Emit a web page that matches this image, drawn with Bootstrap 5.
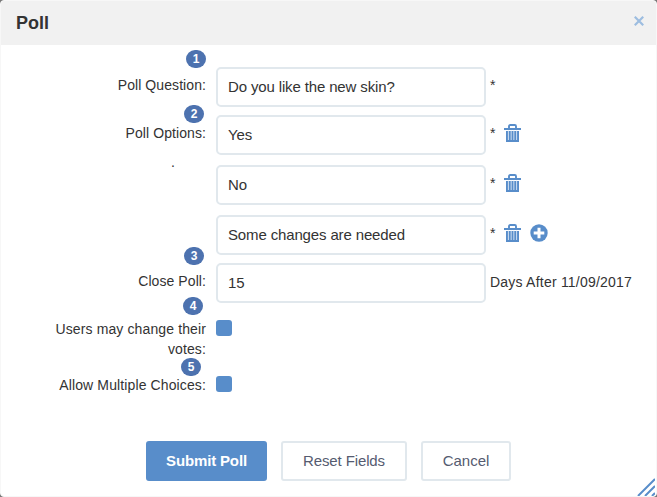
<!DOCTYPE html>
<html lang="en">
<head>
<meta charset="utf-8">
<meta name="viewport" content="width=device-width, initial-scale=1">
<title>Poll</title>
<link href="https://cdn.jsdelivr.net/npm/bootstrap@5.3.0/dist/css/bootstrap.min.css" rel="stylesheet">
<style>
body{background:#777;font-family:"Liberation Sans",Arial,sans-serif;font-size:14px;line-height:20px;color:#333;overflow:hidden}
.poll-dialog{width:657px;height:497px;border:1px solid #f7f7f7;border-radius:4px}
.poll-head{height:44px;background:#f1f1f1;padding:0 13px 0 15px}
.poll-title{font-size:18px;line-height:44px;color:#333}
.close-x{width:10px;height:10px;margin-top:-5px;margin-right:-1px}
.poll-form{padding-top:22px}
.poll-row{min-height:40px;margin-bottom:8px}
.option-row{margin-bottom:10px}
.close-row,.tick-row{margin-bottom:16px}
.tick-row-short{min-height:20px}
.poll-label{width:205px;flex:none;text-align:right;margin-right:10px;padding-top:8px;position:relative;letter-spacing:.08px}
.tick-row .poll-label{padding-top:0;letter-spacing:.12px}
.poll-field{width:270px;height:40px;border:2px solid #e1e8ed;border-radius:5px;padding:0 10px 2px;font-size:15px;line-height:20px;letter-spacing:-.14px;color:#333}
.star{width:18px;padding:8px 0 0 4px}
.days{padding:9px 0 0 4px;letter-spacing:.22px}
.step{position:absolute;width:20px;height:18px;border-radius:9px;background:#4d72af;color:#fff;font-size:12px;line-height:18px;letter-spacing:0;font-weight:700;padding:0;text-align:center}
.step-1{right:0;top:-17px}.step-2{right:2px;top:-10px}.step-3{right:2px;top:-16px}.step-4{right:3px;top:-22px}.step-5{right:5px;top:-17px}
.trash{width:17px;height:18px;margin:9px 0 0}
.plus{width:18px;height:18px;margin:9px 0 0 9px}
.dot{position:absolute;right:31px;top:-13px}
.tick{width:16px;height:16px;border-radius:3px;background:#588dca;margin-top:1px}
.poll-actions{padding:0 0 15px 145px;gap:14px}
.poll-btn{height:40px;border:2px solid #e1e8ed;border-radius:3px;font-size:15px;line-height:20px;color:#555b70;padding:8px 0;background:#fff}
.poll-submit{width:121px;background:#588dca;border-color:#588dca;color:#fff;letter-spacing:-.15px}
.poll-reset{width:126px;letter-spacing:-.12px}.poll-cancel{width:90px}
.grip{position:absolute;right:1px;bottom:0;width:18px;height:18px}
</style>
</head>
<body>
<svg class="d-none"><symbol id="trash" viewBox="0 0 17 18"><path d="M5 4V2.300Q5 1 6.300 1h4.400Q12 1 12 2.300V4" fill="none" stroke="#588dca" stroke-width="1.900"/><path d="M0 4h17v2H0zM2 7h13v11H2z" fill="#588dca"/><path d="M4.400 6.500v9.500M7.150 6.500v9.500M9.850 6.500v9.500M12.600 6.500v9.500" stroke="#dfeaf5" stroke-width=".9"/></symbol></svg>
<main class="poll-dialog bg-white position-relative d-flex flex-column overflow-hidden">
  <header class="poll-head d-flex align-items-center justify-content-between">
    <h1 class="poll-title fw-bold m-0">Poll</h1>
    <svg class="close-x" viewBox="0 0 9 9"><path d="M.7.7l7.600 7.600M8.300.7L.7 8.300" stroke="#9dbde0" stroke-width="2"/></svg>
  </header>
  <form class="poll-form flex-grow-1">
    <div class="poll-row d-flex"><label class="poll-label" for="q">Poll Question:<span class="badge step step-1">1</span></label><input id="q" class="form-control poll-field" value="Do you like the new skin?"><span class="star">*</span></div>
    <div class="poll-row option-row d-flex"><label class="poll-label" for="o1">Poll Options:<span class="badge step step-2">2</span></label><input id="o1" class="form-control poll-field" value="Yes"><span class="star">*</span><svg class="trash"><use href="#trash"/></svg></div>
    <div class="poll-row option-row d-flex"><span class="poll-label"><span class="dot">.</span></span><input class="form-control poll-field" value="No" aria-label="Option 2"><span class="star">*</span><svg class="trash"><use href="#trash"/></svg></div>
    <div class="poll-row d-flex"><span class="poll-label"></span><input class="form-control poll-field" value="Some changes are needed" aria-label="Option 3"><span class="star">*</span><svg class="trash"><use href="#trash"/></svg><svg class="plus" viewBox="0 0 18 18"><circle cx="9" cy="9" r="8.700" fill="#588dca"/><path d="M9 3.700v10.600M3.700 9h10.600" stroke="#fff" stroke-width="3"/></svg></div>
    <div class="poll-row close-row d-flex"><label class="poll-label" for="d">Close Poll:<span class="badge step step-3">3</span></label><input id="d" class="form-control poll-field" value="15"><span class="days">Days After 11/09/2017</span></div>
    <div class="poll-row tick-row d-flex"><span class="poll-label">Users may change their<br>votes:<span class="badge step step-4">4</span></span><span class="tick" role="checkbox" aria-checked="false"></span></div>
    <div class="poll-row tick-row tick-row-short d-flex"><span class="poll-label">Allow Multiple Choices:<span class="badge step step-5">5</span></span><span class="tick" role="checkbox" aria-checked="false"></span></div>
  </form>
  <footer class="poll-actions d-flex">
    <button class="btn poll-btn poll-submit fw-bold">Submit Poll</button>
    <button class="btn poll-btn poll-reset">Reset Fields</button>
    <button class="btn poll-btn poll-cancel">Cancel</button>
  </footer>
  <svg class="grip" viewBox="0 0 18 18"><path d="M1 18L18 1M8 18L18 8M15 18l3-3" stroke="#588dca" stroke-width="2"/></svg>
</main>
<script src="https://cdn.jsdelivr.net/npm/bootstrap@5.3.0/dist/js/bootstrap.bundle.min.js"></script>
</body>
</html>
